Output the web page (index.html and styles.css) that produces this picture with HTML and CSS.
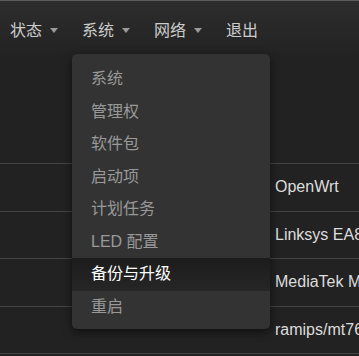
FILE: index.html
```html
<!DOCTYPE html>
<html lang="zh-CN">
<head>
    <meta charset="UTF-8">
    <meta name="viewport" content="width=device-width, initial-scale=1.0">
    <title>概况 - LuCI</title>
    <link rel="stylesheet" href="styles.css">
</head>
<body>
    <!-- 顶部菜单 -->
    <header class="navbar">
        <ul class="nav">
            <li class="nav-item"><a href="#">状态<span class="caret"></span></a></li>
            <li class="nav-item open">
                <a href="#">系统<span class="caret"></span></a>
                <ul class="dropdown">
                    <li><a href="#">系统</a></li>
                    <li><a href="#">管理权</a></li>
                    <li><a href="#">软件包</a></li>
                    <li><a href="#">启动项</a></li>
                    <li><a href="#">计划任务</a></li>
                    <li><a href="#">LED 配置</a></li>
                    <li class="active"><a href="#">备份与升级</a></li>
                    <li><a href="#">重启</a></li>
                </ul>
            </li>
            <li class="nav-item"><a href="#">网络<span class="caret"></span></a></li>
            <li class="nav-item"><a href="#">退出</a></li>
        </ul>
    </header>

    <!-- 系统信息 -->
    <div class="main">
        <table class="info">
            <tr><td class="label"></td><td>OpenWrt</td></tr>
            <tr><td class="label"></td><td>Linksys EA8100</td></tr>
            <tr><td class="label"></td><td>MediaTek MT7621</td></tr>
            <tr><td class="label"></td><td>ramips/mt7621</td></tr>
        </table>
    </div>
</body>
</html>
```

FILE: styles.css
```css
body {
    margin: 0;
    background-color: #222;
    color: #ddd;
    font-family: "Liberation Sans", "Noto Sans CJK SC", sans-serif;
    font-size: 16px;
    overflow: hidden;
}
a {
    color: inherit;
    text-decoration: none;
}
.navbar {
    height: 54px;
    background: linear-gradient(#2d2d2d, #232323);
    box-shadow: inset 0 1px 0 #5a5a5a;
}
.nav {
    display: flex;
    margin: 0;
    padding: 0;
    list-style: none;
}
.nav-item {
    position: relative;
}
.nav-item > a {
    display: flex;
    align-items: center;
    height: 54px;
    box-sizing: border-box;
    padding: 4px 14px 0 10px;
    color: #ccc;
    font-family: "Noto Sans CJK SC", sans-serif;
    font-size: 16px;
}
.caret {
    width: 0;
    height: 0;
    margin-left: 8px;
    margin-top: 2px;
    border-left: 4px solid transparent;
    border-right: 4px solid transparent;
    border-top: 5px solid #999;
}
.dropdown {
    display: none;
    position: absolute;
    top: 100%;
    left: 0;
    z-index: 10;
    width: 198px;
    margin: 0;
    padding: 9px 0 6px;
    list-style: none;
    background-color: #333;
    border-radius: 5px;
    box-shadow: 0 3px 10px rgba(0, 0, 0, 0.55);
}
.nav-item.open .dropdown {
    display: block;
}
.dropdown a {
    display: block;
    height: 32.5px;
    line-height: 32.5px;
    padding: 0 19px;
    color: #999;
    font-family: "Liberation Sans", "Noto Sans CJK SC", sans-serif;
    font-size: 16px;
}
.dropdown .active a {
    color: #fff;
    background: linear-gradient(#1c1c1c, #262626);
}
.main {
    padding-top: 109px;
}
.info {
    width: 640px;
    table-layout: fixed;
    border-collapse: collapse;
}
.info tr {
    height: 47.5px;
}
.info td {
    border-top: 1px solid #444;
    padding: 0 8px;
    white-space: nowrap;
}
.info tr:last-child td {
    border-bottom: 1px solid #444;
}
.info .label {
    width: 251px;
}
```
